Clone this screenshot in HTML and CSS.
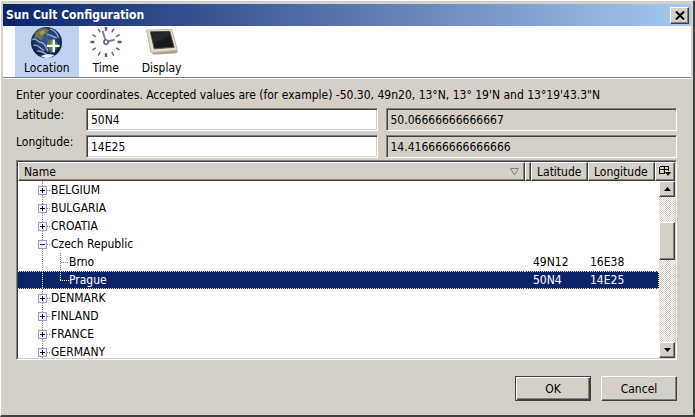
FILE: index.html
```html
<!DOCTYPE html>
<html lang="en">
<head>
<meta charset="utf-8">
<title>Sun Cult Configuration</title>
<link rel="stylesheet" href="styles.css">
</head>
<body>
<svg class="defs" width="0" height="0" aria-hidden="true">
  <defs>
    <g id="box" shape-rendering="crispEdges">
      <path d="M24.5 0V18" class="dots"/>
      <path d="M29 9.5H33" class="dots"/>
      <rect x="20.5" y="5.5" width="8" height="8" rx="1" fill="#f4f4fc" stroke="#9c9cd0"/>
      <path d="M22 9.5H27" stroke="#000"/>
    </g>
    <g id="plus"><use href="#box"/><path d="M24.5 7V12" stroke="#000" shape-rendering="crispEdges"/></g>
    <g id="child" shape-rendering="crispEdges">
      <path d="M24.5 0V18M42.5 0V18M43 9.5H51" class="dots"/>
    </g>
    <g id="last" shape-rendering="crispEdges">
      <path d="M24.5 0V18M42.5 0V9M42 9.5H51" class="dots"/>
    </g>
  </defs>
</svg>
<div class="window">
  <header class="titlebar">
    <h1>Sun Cult Configuration</h1>
    <button class="close raised" aria-label="Close"><svg width="10" height="9" viewBox="0 0 10 9"><path d="M1 .5L9 8.5M9 .5L1 8.5" stroke="#000" stroke-width="2"/></svg></button>
  </header>
  <nav class="toolbar">
    <button class="tab active">
      <svg width="34" height="34" viewBox="0 0 34 34">
        <defs><radialGradient id="sea" cx=".5" cy=".4" r=".6"><stop offset="0" stop-color="#385a9c"/><stop offset=".65" stop-color="#1d3671"/><stop offset="1" stop-color="#0b1534"/></radialGradient>
        <clipPath id="disc"><circle cx="16.500" cy="17" r="16"/></clipPath></defs>
        <circle cx="16.500" cy="17" r="16" fill="url(#sea)"/>
        <g clip-path="url(#disc)">
          <path d="M5 7L10 3L15 2L19 4L17 8L14 9L13 13L10 15L8 12L4 13Z" fill="#6d7440"/>
          <path d="M9 6L14 4L15 7L11 10Z" fill="#a09a62"/>
          <path d="M18 15L23 14L28 18L27 23L22 28L19 24L17 19Z" fill="#5c7c3c"/>
          <path d="M20 16L24 16L26 19L22 21Z" fill="#8b9556"/>
          <path d="M2 14C6 11 7 17 11 17S16 22 18 26M3 20C8 18 10 24 14 25M7 26C12 24 14 30 19 30M20 3C24 4 27 7 29 12M17 9C21 8 23 12 27 12" fill="none" stroke="#c6cfdb" stroke-width="1.500" opacity=".75"/>
          <path d="M10 31Q18 28 25 30L18 34Z" fill="#e8edf4"/>
        </g>
        <path d="M24 14V27M17 20.500H30" stroke="#fff" stroke-width="2.400"/>
      </svg>
      <span>Location</span>
    </button>
    <button class="tab">
      <svg width="34" height="34" viewBox="0 0 34 34">
        <g stroke="#5e5e82" stroke-width="2" fill="none">
          <path d="M17 1V5M17 28V32M1 16.500H5M29 16.500H33" stroke-width="2.500"/>
          <path d="M9 3L11 6.500M25 3L23 6.500M3 9L6.500 11M31 9L27.500 11M3 24.500L6.500 22.500M31 24.500L27.500 22.500M9 30.500L11 27M25 30.500L23 27" stroke-width="1.500"/>
          <path d="M16.500 15L13.500 5M19 16L26 14" stroke="#8080a8"/>
          <circle cx="17" cy="16.500" r="2.200" stroke-width="1.500"/>
        </g>
      </svg>
      <span>Time</span>
    </button>
    <button class="tab">
      <svg width="34" height="34" viewBox="0 0 34 34">
        <path d="M1 4L27 3.500L33 26L32 28L8 29.500L5 26Z" fill="#a8a090"/>
        <path d="M1 4L27 3.500L33 25L6 27.500Z" fill="#e2dccb" stroke="#b8b09f" stroke-width=".7"/>
        <path d="M5 6L25 5.500L29.500 22L9 23.500Z" fill="#17191b" stroke="#55524b"/>
        <path d="M6 7L24 6L25 10L9 18Z" fill="#24282a"/>
      </svg>
      <span>Display</span>
    </button>
  </nav>
  <main>
    <p class="hint">Enter your coordinates. Accepted values are (for example) -50.30, 49n20, 13°N, 13° 19'N and 13°19'43.3"N</p>
    <form class="fields">
      <label for="lat">Latitude:</label>
      <input id="lat" value="50N4">
      <input aria-label="Latitude in degrees" class="result" readonly value="50.06666666666667">
      <label for="lon">Longitude:</label>
      <input id="lon" value="14E25">
      <input aria-label="Longitude in degrees" class="result" readonly value="14.416666666666666">
    </form>
    <div class="tree">
      <table>
        <colgroup><col><col class="c-gap"><col class="c-lat"><col class="c-lon"><col class="c-pick"></colgroup>
        <thead><tr>
          <th class="name"><div>Name<svg width="9" height="8" viewBox="0 0 9 8"><path d="M.5 .5H8.500L4.500 7Z" fill="none" stroke="#808080"/></svg></div></th>
          <th class="gap"></th>
          <th>Latitude</th>
          <th>Longitude</th>
          <th class="pick"><button aria-label="Choose columns"><svg width="12" height="11" viewBox="0 0 12 11"><path d="M.5 .5H9.500V5M.5 .5V7.500H5M.5 3.500H9.500M5 .5V7.500" fill="none" stroke="#000" shape-rendering="crispEdges"/><path d="M6 6H12L9 10Z"/></svg></button></th>
        </tr></thead>
        <tbody>
          <tr><td><div><svg width="33" height="18"><use href="#plus"/></svg>BELGIUM</div></td><td></td><td></td><td></td><td></td></tr>
          <tr><td><div><svg width="33" height="18"><use href="#plus"/></svg>BULGARIA</div></td><td></td><td></td><td></td><td></td></tr>
          <tr><td><div><svg width="33" height="18"><use href="#plus"/></svg>CROATIA</div></td><td></td><td></td><td></td><td></td></tr>
          <tr><td><div><svg width="33" height="18"><use href="#box"/></svg>Czech Republic</div></td><td></td><td></td><td></td><td></td></tr>
          <tr><td><div><svg width="51" height="18"><use href="#child"/></svg>Brno</div></td><td></td><td>49N12</td><td>16E38</td><td></td></tr>
          <tr class="selected"><td><div><svg width="51" height="18"><use href="#last"/></svg>Prague</div></td><td></td><td>50N4</td><td>14E25</td><td><div class="edge"></div></td></tr>
          <tr><td><div><svg width="33" height="18"><use href="#plus"/></svg>DENMARK</div></td><td></td><td></td><td></td><td></td></tr>
          <tr><td><div><svg width="33" height="18"><use href="#plus"/></svg>FINLAND</div></td><td></td><td></td><td></td><td></td></tr>
          <tr><td><div><svg width="33" height="18"><use href="#plus"/></svg>FRANCE</div></td><td></td><td></td><td></td><td></td></tr>
          <tr><td><div><svg width="33" height="18"><use href="#plus"/></svg>GERMANY</div></td><td></td><td></td><td></td><td></td></tr>
        </tbody>
      </table>
      <div class="scrollbar">
        <button class="raised" aria-label="Scroll up"><svg width="7" height="4" viewBox="0 0 7 4"><path d="M0 4L3.500 0L7 4Z"/></svg></button>
        <div class="track"><div class="thumb raised"></div></div>
        <button class="raised" aria-label="Scroll down"><svg width="7" height="4" viewBox="0 0 7 4"><path d="M0 0H7L3.500 4Z"/></svg></button>
      </div>
    </div>
    <footer>
      <button class="action default">OK</button>
      <button class="action">Cancel</button>
    </footer>
  </main>
</div>
</body>
</html>
```

FILE: styles.css
```css
* { box-sizing: border-box; }

:root {
  --face: #d4d0c8;
  --shadow: #808080;
  --dark: #404040;
  --select: #0a246a;
  --line: #808080;
}

body {
  margin: 0;
  font-family: "DejaVu Sans Condensed", "DejaVu Sans", sans-serif;
  font-stretch: condensed;
  font-size: 12px;
  line-height: 18px;
  color: #000;
}

button, input { font: inherit; color: inherit; }
button { padding: 0; background: var(--face); }
.defs { position: absolute; }
.dots { stroke: var(--line); stroke-dasharray: 1 1; fill: none; }

.raised {
  background: var(--face);
  border: 1px solid;
  border-color: #fff var(--dark) var(--dark) #fff;
  box-shadow: inset -1px -1px var(--shadow);
  display: flex;
  align-items: center;
  justify-content: center;
}

.window {
  min-height: 100vh;
  display: flex;
  flex-direction: column;
  padding: 2px;
  background: var(--face);
  border: 2px solid;
  border-color: #fff var(--dark) var(--dark) #fff;
  border-width: 1px 2px 2px 1px;
  box-shadow: inset 0 0 0 1px var(--face), inset -1px -1px var(--shadow);
}

.titlebar {
  display: flex;
  align-items: center;
  justify-content: space-between;
  height: 22px;
  margin-top: 1px;
  padding: 0 2px 0 3px;
  background: linear-gradient(to right, #0a246a, #a6caf0);
}
.titlebar h1 {
  margin: 0;
  font-size: 12px;
  color: #fff;
}
.close { width: 19px; height: 17px; }

.toolbar {
  display: flex;
  gap: 1px;
  height: 52px;
  padding-left: 12px;
  background: #fff;
  border-bottom: 1px solid var(--shadow);
  box-shadow: 0 1px #fff;
}
.tab {
  display: flex;
  flex-direction: column;
  align-items: center;
  padding: 0 9px;
  border: 0;
  background: none;
}
.active { background: #c1d2ee; }

main {
  flex: 1;
  display: flex;
  flex-direction: column;
  padding: 8px 14px 12px 13px;
}
.hint { margin: 0; }

.fields {
  display: grid;
  grid-template-columns: 62px 1fr 1fr;
  column-gap: 8px;
  row-gap: 4px;
  margin: 4px 0 2px;
}
.fields input {
  width: 100%;
  min-width: 0;
  height: 23px;
  padding: 0 4px;
  background: #fff;
  border: 1px solid;
  border-color: var(--shadow) #fff #fff var(--shadow);
  box-shadow: inset 1px 1px var(--dark), inset -1px -1px var(--face);
  border-radius: 0;
  outline: 0;
}
.fields .result { background: var(--face); }
.fields label { height: 18px; margin-top: -2px; }

.tree {
  position: relative;
  flex: 1 1 0;
  min-height: 120px;
  overflow: hidden;
  background: #fff;
  border: 1px solid;
  border-color: var(--shadow) #fff #fff var(--shadow);
}
.tree::after {
  content: "";
  position: absolute;
  inset: 0;
  border: 1px solid;
  border-color: var(--dark) var(--face) var(--face) var(--dark);
  pointer-events: none;
}
table {
  width: 100%;
  table-layout: fixed;
  border-collapse: separate;
  border-spacing: 0;
  border: 1px solid transparent;
}
.c-gap { width: 6px; }
.c-lat { width: 57px; }
.c-lon { width: 67px; }
.c-pick { width: 20px; }
th {
  height: 19px;
  padding: 0 5px;
  font-weight: normal;
  text-align: left;
  line-height: 16px;
  background: var(--face);
  border: 1px solid;
  border-color: #fff var(--dark) var(--dark) #fff;
  box-shadow: inset -1px -1px var(--shadow);
}
.name div { display: flex; align-items: center; justify-content: space-between; }
.gap { padding: 0; }
.pick { padding: 0; }
.pick button { display: block; width: 100%; height: 15px; border: 0; background: none; }
.pick svg { display: block; margin: 0 auto; }
td { height: 18px; padding: 0; line-height: 18px; white-space: nowrap; }
td:nth-child(3), td:nth-child(4) { padding-left: 2px; }
td:first-child div { display: flex; }
tbody svg { flex: none; }

.selected { --line: #fff; }
.selected td {
  color: #fff;
  background:
    repeating-linear-gradient(to right, #f5db95 0 1px, var(--select) 1px 2px) top / 100% 1px no-repeat,
    repeating-linear-gradient(to right, #f5db95 0 1px, var(--select) 1px 2px) bottom / 100% 1px no-repeat,
    var(--select);
}
.selected .edge {
  width: 4px;
  height: 18px;
  border-right: 1px dotted #f5db95;
}

.scrollbar {
  position: absolute;
  top: 20px;
  right: 1px;
  bottom: 1px;
  width: 16px;
  display: flex;
  flex-direction: column;
}
.scrollbar button { width: 16px; height: 16px; }
.track {
  flex: 1;
  padding-top: 25px;
  background: repeating-conic-gradient(#fff 0 25%, var(--face) 0 50%) 0 0 / 2px 2px;
}
.thumb { height: 38px; }

footer {
  display: flex;
  justify-content: flex-end;
  gap: 10px;
  margin-top: 16px;
}
.action {
  width: 76px;
  height: 25px;
  border: 1px solid;
  border-color: #fff var(--dark) var(--dark) #fff;
  box-shadow: inset -1px -1px var(--shadow);
}
.default {
  border-color: var(--dark);
  box-shadow: inset 1px 1px #fff, inset -1px -1px var(--dark), inset -2px -2px var(--shadow);
}
```
